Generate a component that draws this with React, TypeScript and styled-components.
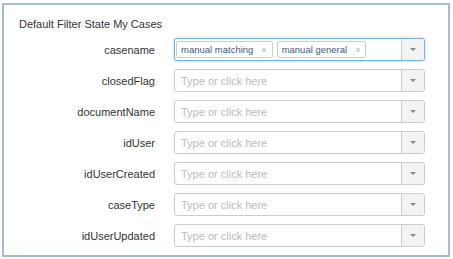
import React from "react";
import styled, { createGlobalStyle } from "styled-components";

const GlobalStyle = createGlobalStyle`
  body {
    margin: 0;
    background: #fff;
    font-family: "Liberation Sans", Arial, sans-serif;
  }
`;

const fields = [
  { name: "casename", tags: ["manual matching", "manual general"], focused: true },
  { name: "closedFlag" },
  { name: "documentName" },
  { name: "idUser" },
  { name: "idUserCreated" },
  { name: "caseType" },
  { name: "idUserUpdated" },
];

const App = () => {
  return (
    <>
      <GlobalStyle />
      <Frame>
        <Title>Default Filter State My Cases</Title>
        <Form>
          {fields.map((f) => (
            <Row key={f.name}>
              <Label>{f.name}</Label>
              <Select focused={!!f.focused}>
                <Values>
                  {f.tags ? (
                    f.tags.map((t) => (
                      <Tag key={t}>
                        {t}
                        <Remove>×</Remove>
                      </Tag>
                    ))
                  ) : (
                    <Placeholder>Type or click here</Placeholder>
                  )}
                </Values>
                <Toggle>
                  <Caret />
                </Toggle>
              </Select>
            </Row>
          ))}
        </Form>
      </Frame>
    </>
  );
};

const Frame = styled.div`
  box-sizing: border-box;
  margin: 3px 4px 0 2px;
  width: 448px;
  height: 254px;
  border: 2px solid #a5bad3;
  padding: 11px 0 0 15px;
`;

const Title = styled.div`
  font-size: 11px;
  line-height: 17px;
  color: #333;
`;

const Form = styled.div`
  display: flex;
  flex-direction: column;
  gap: 8px;
  margin-top: 5px;
`;

const Row = styled.div`
  display: flex;
  align-items: center;
`;

const Label = styled.div`
  width: 136px;
  margin-right: 19px;
  text-align: right;
  font-size: 11px;
  color: #333;
`;

const Select = styled.div<{ focused: boolean }>`
  box-sizing: border-box;
  width: 251px;
  height: 23px;
  display: flex;
  border: 1px solid ${(p) => (p.focused ? "#74b2e4" : "#ccc")};
  border-radius: 3px;
  box-shadow: ${(p) =>
    p.focused ? "0 0 3px rgba(102, 175, 233, 0.6)" : "none"};
  background: #fff;
  overflow: hidden;
`;

const Values = styled.div`
  flex: 1;
  min-width: 0;
  display: flex;
  align-items: center;
  gap: 4px;
  padding: 0 1px;
`;

const Placeholder = styled.span`
  font-size: 11px;
  color: #bbb;
  padding-left: 5px;
  white-space: nowrap;
`;

const Tag = styled.span`
  box-sizing: border-box;
  flex-shrink: 0;
  height: 17px;
  display: inline-flex;
  align-items: center;
  padding: 0 5px 0 4px;
  border: 1px solid #ccc;
  border-radius: 2px;
  font-size: 9.5px;
  color: #3c5a80;
  white-space: nowrap;
`;

const Remove = styled.span`
  margin-left: 8px;
  font-size: 9px;
  color: #aaa;
`;

const Toggle = styled.div`
  width: 22px;
  flex-shrink: 0;
  display: flex;
  align-items: center;
  justify-content: center;
  background: #f3f3f3;
  border-left: 1px solid #ccc;
`;

const Caret = styled.span`
  width: 0;
  height: 0;
  border-left: 3px solid transparent;
  border-right: 3px solid transparent;
  border-top: 3px solid #888;
`;

export default App;
